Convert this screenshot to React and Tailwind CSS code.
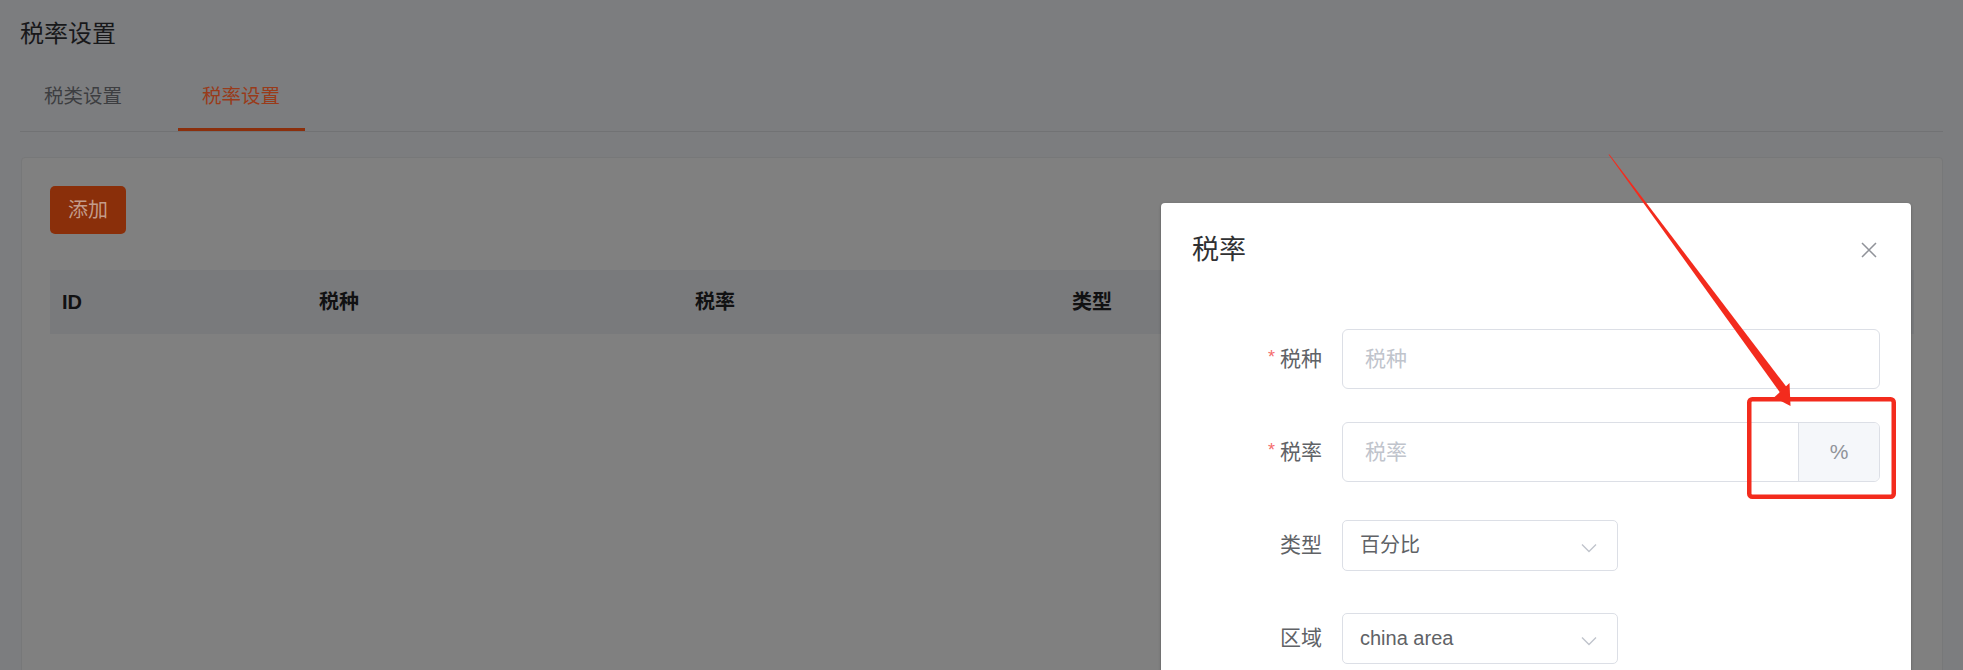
import React from "react";

const FONT = "font-[family-name:'Liberation_Sans','Noto_Sans_CJK_SC',sans-serif]";

function Chevron() {
  return (
    <svg width="16" height="10" viewBox="0 0 16 10" className="mt-[6px]">
      <polyline points="1,1.5 8,8.5 15,1.5" fill="none" stroke="#c0c4cc" strokeWidth="1.4" />
    </svg>
  );
}

function Label({ text, required }) {
  return (
    <div className="w-[150px] shrink-0 pr-[20px] flex items-center justify-end text-[21px] text-[#606266]">
      {required && <span className="text-[#f56c6c] text-[18px] mr-[5px] -mt-[4px]">*</span>}
      <span>{text}</span>
    </div>
  );
}

export default function App() {
  return (
    <div className={`relative w-[1963px] h-[670px] overflow-hidden bg-[#7c7d7f] ${FONT}`}>
      {/* page */}
      <div className="px-[20px]">
        <div className="pt-[21px] text-[24px] leading-[26px] text-[#18181a]">税率设置</div>
        <div className="mt-[15px] flex gap-[31px] border-b border-[#717274]">
          <div className="h-[69px] pl-[24px] pr-[25px] flex items-center text-[19.5px] text-[#3d3e41]">税类设置</div>
          <div className="relative h-[69px] pl-[24px] pr-[25px] flex items-center text-[19.5px] text-[#993b1a]">
            税率设置
            <div className="absolute left-0 right-0 bottom-0 h-[3px] bg-[#8b2f0c]" />
          </div>
        </div>
      </div>

      <div className="ml-[21px] mr-[20px] mt-[25px] h-[600px] rounded-[4px] border border-[#777879] bg-[#808080] pt-[28px] px-[28px]">
        <button className="w-[76px] h-[48px] rounded-[5px] bg-[#8a2f0a] text-[20px] text-[#c39c8b] flex items-center justify-center">
          添加
        </button>
        <div className="mt-[36px] h-[64px] bg-[#797a7c] grid grid-cols-[257px_376px_377px_376px_1fr] items-center text-[20px] font-bold text-[#111112]">
          <div className="pl-[12px]">ID</div>
          <div className="pl-[12px]">税种</div>
          <div className="pl-[12px]">税率</div>
          <div className="pl-[12px]">类型</div>
          <div className="pl-[12px]">区域</div>
        </div>
      </div>

      {/* dialog */}
      <div className="absolute left-[1161px] top-[203px] w-[750px] h-[520px] bg-white rounded-[4px] shadow-[0_1px_3px_rgba(0,0,0,0.3)]">
        <div className="h-[94px] pl-[31px] pr-[34px] flex items-center justify-between">
          <span className="text-[27px] text-[#303133]">税率</span>
          <svg width="16" height="16" viewBox="0 0 16 16">
            <path d="M1 1 L15 15 M15 1 L1 15" stroke="#909399" strokeWidth="1.5" fill="none" />
          </svg>
        </div>
        <div className="pt-[32px] px-[31px] flex flex-col gap-[33px]">
          <div className="flex h-[60px] items-center">
            <Label text="税种" required />
            <div className="flex-1 h-[60px] border border-[#dcdfe6] rounded-[6px] flex items-center pl-[22px] text-[21px] text-[#c0c4cc]">
              税种
            </div>
          </div>
          <div className="flex h-[60px] items-center">
            <Label text="税率" required />
            <div className="flex-1 h-[60px] border border-[#dcdfe6] rounded-[6px] flex overflow-hidden">
              <div className="flex-1 flex items-center pl-[22px] text-[21px] text-[#c0c4cc]">税率</div>
              <div className="w-[81px] border-l border-[#dcdfe6] bg-[#f5f7fa] flex items-center justify-center text-[21px] text-[#909399]">
                %
              </div>
            </div>
          </div>
          <div className="flex h-[60px] items-center">
            <Label text="类型" />
            <div className="w-[276px] h-[51px] border border-[#dcdfe6] rounded-[5px] flex items-center justify-between pl-[17px] pr-[20px] text-[20px] text-[#606266]">
              <span>百分比</span>
              <Chevron />
            </div>
          </div>
          <div className="flex h-[60px] items-center">
            <Label text="区域" />
            <div className="w-[276px] h-[51px] border border-[#dcdfe6] rounded-[5px] flex items-center justify-between pl-[17px] pr-[20px] text-[20px] text-[#606266]">
              <span>china area</span>
              <Chevron />
            </div>
          </div>
        </div>
      </div>

      {/* annotation */}
      <svg className="absolute left-0 top-0 pointer-events-none" width="1963" height="670" viewBox="0 0 1963 670">
        <polygon points="1608.5,154.5 1609.5,154.5 1786.5,387 1780,392.5" fill="#f32b1d" />
        <polygon points="1790.5,406 1789.5,383 1774,397.5" fill="#f32b1d" />
        <rect x="1749.25" y="399.25" width="144.5" height="97.5" rx="3" fill="none" stroke="#f32b1d" strokeWidth="4.5" />
      </svg>
    </div>
  );
}
